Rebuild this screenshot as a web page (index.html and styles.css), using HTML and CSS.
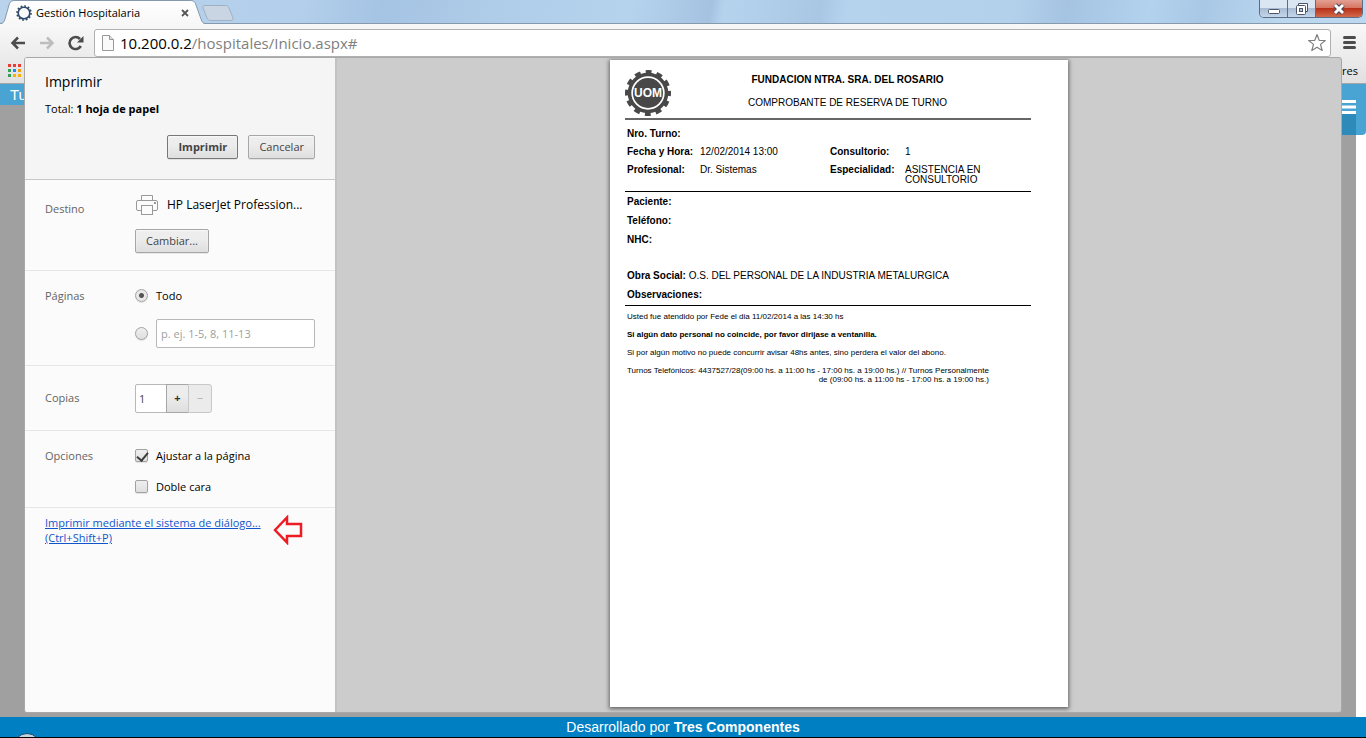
FILE: index.html
```html
<!DOCTYPE html>
<html lang="es">
<head>
<meta charset="utf-8">
<title>Gestión Hospitalaria</title>
<link rel="stylesheet" href="styles.css">
</head>
<body>
<header class="tabstrip">
  <div class="tab">
    <svg class="tab-shape" width="206" height="24" viewBox="0 0 206 24" aria-hidden="true">
      <defs><linearGradient id="tabfill" x1="0" y1="0" x2="0" y2="1"><stop offset="0" stop-color="#fff"/><stop offset="1" stop-color="#f7f7f7"/></linearGradient></defs>
      <path d="M0 24C3 24 4 22 5 19L9 5C10 2 11 1 14 1H190C194 1 195 2 196 5L201 19C202 22 203 24 206 24Z" fill="url(#tabfill)"/>
      <path d="M0 23.500C3 23.500 4 22 5 19L9 5C10 2 11 .5 14 .5H190C194 .5 195 2 196 5L201 19C202 22 203 23.500 206 23.500" fill="none" stroke="#8799ad"/>
    </svg>
    <svg class="favicon" width="16" height="16" viewBox="0 0 16 16" aria-hidden="true"><circle cx="8" cy="8" r="5.800" fill="none" stroke="#2d4966" stroke-width="1.600"/><circle cx="8" cy="8" r="7" fill="none" stroke="#2d4966" stroke-width="1.600" stroke-dasharray="1.800 1.865"/></svg>
    <span class="tab-title">Gestión Hospitalaria</span>
    <button class="tab-close" aria-label="Cerrar pestaña"><svg width="8" height="8" viewBox="0 0 8 8"><path d="M1 1L7 7M7 1L1 7" stroke="#555" stroke-width="1.800"/></svg></button>
  </div>
  <button class="new-tab" aria-label="Nueva pestaña"><svg width="32" height="16" viewBox="0 0 32 16"><path d="M3 .5H23C25 .5 26 1 27 3L31 13C31.500 14.500 31 15.500 29 15.500H9C7 15.500 6 15 5 13L1 3C.5 1.500 1 .5 3 .5Z" fill="#c9d5e2" stroke="#a0b1c4"/></svg></button>
  <div class="window-buttons">
    <button class="win" aria-label="Minimizar"><svg width="14" height="12" viewBox="0 0 14 12"><rect x="1.500" y="6.500" width="11" height="4" rx="1" fill="#fff" stroke="#4d5569"/></svg></button>
    <button class="win" aria-label="Restaurar"><svg width="14" height="14" viewBox="0 0 14 14"><path d="M3.500 3V1.500H12.500V9.500H11" fill="#fff" stroke="#4d5569"/><rect x="1.500" y="3.500" width="9" height="9" rx="1" fill="#fff" stroke="#4d5569"/><rect x="4.500" y="6.500" width="3" height="3" fill="#b5c4d8" stroke="#4d5569"/></svg></button>
    <button class="win close" aria-label="Cerrar"><svg width="14" height="12" viewBox="0 0 14 12"><path d="M3 2L11 10M11 2L3 10" stroke="#4a4256" stroke-width="5"/><path d="M3 2L11 10M11 2L3 10" stroke="#fff" stroke-width="3"/></svg></button>
  </div>
</header>
<nav class="toolbar">
  <button class="nav-button" aria-label="Atrás"><svg width="16" height="14" viewBox="0 0 16 14"><path d="M15 7H3M8 1.500L2.500 7L8 12.500" fill="none" stroke="#4c4c4c" stroke-width="2.500"/></svg></button>
  <button class="nav-button" aria-label="Adelante"><svg width="16" height="14" viewBox="0 0 16 14"><path d="M1 7H13M8 1.500L13.500 7L8 12.500" fill="none" stroke="#bdbdbd" stroke-width="2.500"/></svg></button>
  <button class="nav-button" aria-label="Recargar"><svg width="16" height="16" viewBox="0 0 16 16"><path d="M12.800 11A6 6 0 1 1 12 4" fill="none" stroke="#4c4c4c" stroke-width="2.600"/><path d="M15.500 1V7.500H9Z" fill="#4c4c4c"/></svg></button>
  <div class="omnibox">
    <svg width="12" height="16" viewBox="0 0 12 16" aria-hidden="true"><path d="M.5 .5H7.500L11.500 4.500V15.500H.5Z" fill="#fafafa" stroke="#999"/><path d="M7.500 .5V4.500H11.500" fill="#ddd" stroke="#999"/></svg>
    <span class="url"><span class="host">10.200.0.2</span>/hospitales/Inicio.aspx#</span>
    <svg width="20" height="20" viewBox="0 0 20 20" aria-hidden="true"><path d="M10 1.500L12.200 7.300L18.300 7.500L13.500 11.400L15.200 17.500L10 14.200L4.800 17.500L6.500 11.400L1.700 7.500L7.800 7.300Z" fill="#fff" stroke="#808080" stroke-width="1.200" stroke-linejoin="round"/></svg>
  </div>
  <button class="menu-button" aria-label="Menú"><svg width="13" height="13" viewBox="0 0 13 13"><path d="M1.500 1.500H11.500M1.500 6.500H11.500M1.500 11.500H11.500" stroke="#4c4c4c" stroke-width="3" stroke-linecap="round"/></svg></button>
</nav>
<div class="bookmarks">
  <svg width="14" height="14" viewBox="0 0 14 14" aria-hidden="true"><path d="M0 0h3v3h-3zM5 0h3v3h-3zM10 0h3v3h-3z" fill="#ee3b34"/><path d="M0 5h3v3h-3zM0 10h3v3h-3z" fill="#32a05a"/><path d="M5 5h3v3h-3z" fill="#1a8cf5"/><path d="M10 5h3v3h-3z" fill="#f29c11"/><path d="M5 10h3v3h-3zM10 10h3v3h-3z" fill="#f9b000"/></svg>
  <span>res</span>
</div>
<main class="page">
  <div class="page-head">
    <span class="page-tab">Tu</span>
    <div class="page-menu"><svg width="14" height="14" viewBox="0 0 14 14" aria-hidden="true"><path d="M0 1.500H14M0 7H14M0 12.500H14" stroke="#fff" stroke-width="3"/></svg></div>
  </div>
</main>
<footer class="page-footer">Desarrollado por&nbsp;<b>Tres Componentes</b><span class="orb"></span></footer>

<section class="dialog" role="dialog" aria-label="Imprimir">
  <form class="settings">
    <div class="summary">
      <h1>Imprimir</h1>
      <p>Total: <b>1 hoja de papel</b></p>
      <div class="actions">
        <button type="button" class="button primary">Imprimir</button>
        <button type="button" class="button">Cancelar</button>
      </div>
    </div>
    <div class="group destination">
      <span class="group-label">Destino</span>
      <div class="group-body">
        <div class="printer">
          <svg width="24" height="22" viewBox="0 0 24 22" aria-hidden="true"><g fill="#fcfcfc" stroke="#999"><path d="M6.500 6.500V1.500H17.500V6.500"/><rect x="1.500" y="6.500" width="21" height="10" rx="1.500"/><rect x="6.500" y="11.500" width="11" height="9"/></g><path d="M19 8h2v2h-2z" fill="#999"/></svg>
          <span>HP LaserJet Profession...</span>
        </div>
        <button type="button" class="button">Cambiar...</button>
      </div>
    </div>
    <div class="group pages">
      <span class="group-label">Páginas</span>
      <div class="group-body">
        <label class="choice"><input type="radio" name="pages" checked>Todo</label>
        <div class="choice"><input type="radio" name="pages" aria-label="Intervalo"><input type="text" class="range" placeholder="p. ej. 1-5, 8, 11-13" aria-label="Intervalo de páginas"></div>
      </div>
    </div>
    <div class="group copies">
      <label class="group-label" for="copies">Copias</label>
      <div class="stepper">
        <input type="text" id="copies" value="1">
        <button type="button">+</button>
        <button type="button" disabled>−</button>
      </div>
    </div>
    <div class="group options">
      <span class="group-label">Opciones</span>
      <div class="group-body">
        <label class="choice"><input type="checkbox" checked>Ajustar a la página</label>
        <label class="choice"><input type="checkbox">Doble cara</label>
      </div>
    </div>
    <div class="system">
      <a href="#">Imprimir mediante el sistema de diálogo...<br>(Ctrl+Shift+P)</a>
      <svg width="30" height="30" viewBox="0 0 30 30" aria-hidden="true"><path d="M2 15L14 2.500V9H28V21H14V27.500Z" fill="none" stroke="#ed1c24" stroke-width="2.500"/></svg>
    </div>
  </form>
  <div class="preview">
    <article class="sheet">
      <header class="sheet-head">
        <svg width="46" height="46" viewBox="0 0 46 46" aria-label="UOM">
          <circle cx="23" cy="23" r="21.300" fill="none" stroke="#484848" stroke-width="3.400" stroke-dasharray="6 5.150" stroke-dashoffset="3"/>
          <circle cx="23" cy="23" r="18.500" fill="#fff" stroke="#484848" stroke-width="3.600"/>
          <circle cx="23" cy="23" r="15" fill="#484848"/>
          <text x="23" y="27" text-anchor="middle" class="logo-text">UOM</text>
        </svg>
        <div class="sheet-title"><b>FUNDACION NTRA. SRA. DEL ROSARIO</b><span>COMPROBANTE DE RESERVA DE TURNO</span></div>
      </header>
      <dl class="appointment">
        <dt>Nro. Turno:</dt><dd class="wide"></dd>
        <dt>Fecha y Hora:</dt><dd>12/02/2014 13:00</dd><dt>Consultorio:</dt><dd>1</dd>
        <dt>Profesional:</dt><dd>Dr. Sistemas</dd><dt>Especialidad:</dt><dd class="specialty">ASISTENCIA EN CONSULTORIO</dd>
      </dl>
      <div class="patient">
        <p><b>Paciente:</b></p>
        <p><b>Teléfono:</b></p>
        <p><b>NHC:</b></p>
        <p class="insurance"><b>Obra Social:</b> O.S. DEL PERSONAL DE LA INDUSTRIA METALURGICA</p>
        <p><b>Observaciones:</b></p>
      </div>
      <div class="notes">
        <p>Usted fue atendido por Fede el dia 11/02/2014 a las 14:30 hs</p>
        <p><b>Si algún dato personal no coincide, por favor dirijase a ventanilla.</b></p>
        <p>Si por algún motivo no puede concurrir avisar 48hs antes, sino perdera el valor del abono.</p>
        <p class="hours">Turnos Telefónicos: 4437527/28(09:00 hs. a 11:00 hs - 17:00 hs. a 19:00 hs.) // Turnos Personalmente<br>de (09:00 hs. a 11:00 hs - 17:00 hs. a 19:00 hs.)</p>
      </div>
    </article>
  </div>
</section>
</body>
</html>
```
FILE: styles.css
```css
* { box-sizing: border-box; }
body {
  margin: 0;
  height: 100vh;
  display: flex;
  flex-direction: column;
  position: relative;
  overflow: hidden;
  background: #fff;
  font: 11px/16px "Open Sans", "Noto Sans", sans-serif;
  color: #000;
}
button { font: inherit; padding: 0; border: 0; background: none; }
svg { display: block; flex: none; }
p, h1, dl, dd { margin: 0; }

/* Browser frame */
.tabstrip {
  flex: none;
  height: 24px;
  display: flex;
  align-items: center;
  border-bottom: 1px solid #8799ad;
  background: linear-gradient(100deg, #b9d3ec 0%, #b3cfeb 22%, #a5c3e3 28%, #afcde8 36%, #b6d3ee 46%, #a5c3e1 52%, #b6d3ee 53%, #a9c6e4 60%, #b6d3ee 62%, #b4d1ec 74%, #a5c4e2 78%, #b2d2ee 84%, #a9c8e5 88%, #bcd8f0 94%, #bcd8f0 100%);
}
.tab {
  position: relative;
  width: 206px;
  height: 24px;
  margin-bottom: -1px;
  padding: 1px 17px 0 16px;
  display: flex;
  align-items: center;
  gap: 4px;
}
.tab-shape { position: absolute; left: 0; top: 0; }
.favicon, .tab-title, .tab-close { position: relative; }
.tab-title { flex: 1; white-space: nowrap; }
.tab-close { width: 8px; height: 8px; }
.new-tab { margin: 2px 0 0 -4px; }
.window-buttons {
  align-self: flex-start;
  margin: 0 3px 0 auto;
  height: 18px;
  display: flex;
  border: 1px solid #5b6d85;
  border-top: 0;
  border-radius: 0 0 5px 5px;
  overflow: hidden;
}
.win {
  width: 28px;
  display: grid;
  place-items: center;
  border-right: 1px solid #5b6d85;
  background: linear-gradient(#dbe6f3 50%, #a9bcd4 50%, #c5d6ea);
}
.win.close { width: 46px; border-right: 0; background: linear-gradient(#e3a093 0, #d67665 45%, #b93019 50%, #d2694b); }
.toolbar {
  flex: none;
  height: 34px;
  padding: 4px 10px 1px;
  display: flex;
  align-items: center;
  gap: 13px;
  background: linear-gradient(#f8f8f8, #ebebeb);
}
.nav-button { display: grid; place-items: center; width: 16px; }
.omnibox {
  flex: 1;
  height: 28px;
  margin-left: -3px;
  padding: 0 3px 0 7px;
  display: flex;
  align-items: center;
  gap: 6px;
  border: 1px solid #b0b0b0;
  border-radius: 3px;
  background: #fff;
}
.url { flex: 1; font-size: 15px; color: #808080; }
.host { color: #000; }
.menu-button { margin-left: -1px; }
.bookmarks {
  flex: none;
  height: 26px;
  padding: 0 8px;
  display: flex;
  align-items: center;
  justify-content: space-between;
  border-bottom: 1px solid #a5a5a5;
  background: linear-gradient(#ebebeb, #e0e0e0);
}

/* Page behind the dialog */
.page { flex: 1; border-right: 10px solid #fff; background: #a0a0a0; }
.page-head { display: flex; justify-content: space-between; align-items: flex-start; margin-right: -10px; }
.page-tab { width: 40px; padding: 1px 0 0 10px; background: #49a3d3; color: #fff; font: 15px/20px "Liberation Sans", Arial, sans-serif; }
.page-menu {
  width: 40px;
  height: 51px;
  padding: 16px 10px 0 16px;
  border-radius: 0 0 4px 0;
  background: linear-gradient(#2e8ab8, #2e8ab8) 0 29px / 30px 22px no-repeat, #49a3d3;
}
.page-footer {
  position: relative;
  flex: none;
  height: 21px;
  border-bottom: 1px solid #000;
  background: #0080c3;
  color: #fff;
  text-align: center;
  font: 14px/20px "Liberation Sans", Arial, sans-serif;
  overflow: hidden;
}
.orb { position: absolute; left: 13px; top: 16px; width: 28px; height: 28px; border: 1px solid #114a70; border-radius: 50%; background: #c8d4de; }

/* Print dialog */
.dialog {
  position: absolute;
  inset: 57px 24px 25px;
  display: flex;
  border: 1px solid #a8a8a8;
  border-radius: 3px;
  overflow: hidden;
  background: #ccc;
}
.settings { flex: none; width: 312px; border-right: 2px solid #c2c2c2; background: #fbfbfb; }
.summary { height: 122px; padding: 14px 20px 0; border-bottom: 1px solid #c8c8c8; background: #f5f5f5; }
.summary h1 { font-size: 14px; line-height: 20px; font-weight: 400; }
.summary p { margin-top: 9px; }
.actions { display: flex; justify-content: flex-end; gap: 10px; margin-top: 18px; }
.button {
  height: 24px;
  padding: 0 10px;
  border: 1px solid #a6a6a6;
  border-radius: 2px;
  background: linear-gradient(#ededed 38%, #dedede);
  box-shadow: 0 1px 0 rgba(0, 0, 0, .08), inset 0 1px 2px rgba(255, 255, 255, .75);
  color: #444;
}
.button.primary { border-color: #777; font-weight: 700; }
.group { display: grid; grid-template-columns: 90px minmax(0, 1fr); padding: 0 20px; border-bottom: 1px solid #e6e6e6; }
.group-label { color: #646464; }
.destination { height: 91px; padding-top: 14px; }
.destination .group-label { margin-top: 7px; }
.printer { display: flex; align-items: center; gap: 8px; height: 22px; margin-bottom: 13px; font-size: 12px; white-space: nowrap; }
.pages { height: 95px; padding-top: 17px; }
.choice { display: flex; align-items: center; gap: 8px; }
.pages .choice + .choice { margin-top: 15px; }
input { font: inherit; margin: 0; color: #444; }
input[type="radio"], input[type="checkbox"] {
  appearance: none;
  flex: none;
  width: 13px;
  height: 13px;
  margin-bottom: 1px;
  border: 1px solid #a2a2a2;
  border-radius: 2px;
  background: linear-gradient(#efefef, #dfdfdf);
  box-shadow: 0 1px 1px rgba(0, 0, 0, .1);
}
input[type="radio"] { border-radius: 50%; }
input[type="radio"]:checked { background: radial-gradient(circle, #555 0 2px, #e8e8e8 3px); }
input[type="checkbox"]:checked::after {
  content: "";
  display: block;
  width: 5px;
  height: 9px;
  margin: 0 0 0 3px;
  border: solid #3c3c3c;
  border-width: 0 2px 2px 0;
  transform: rotate(40deg);
}
.range { flex: 1; min-width: 0; height: 29px; padding: 0 4px; border: 1px solid #b8b8b8; border-radius: 2px; background: #fff; }
.range::placeholder { color: #a0a0a0; opacity: 1; }
.copies { height: 65px; align-items: center; }
.stepper { display: flex; }
.stepper input { width: 32px; height: 29px; padding: 0 3px; border: 1px solid #b8b8b8; border-radius: 2px 0 0 2px; }
.stepper button { width: 23px; height: 29px; margin-left: -1px; border: 1px solid #a6a6a6; background: linear-gradient(#ededed 38%, #dedede); color: #333; font-weight: 700; }
.stepper button:last-child { width: 24px; border-color: #c8c8c8; border-radius: 0 3px 3px 0; background: #ebebeb; color: #aaa; font-weight: 400; }
.options { height: 77px; padding-top: 17px; }
.options .choice + .choice { margin-top: 15px; }
.system { display: flex; gap: 12px; padding: 7px 20px; line-height: 15px; white-space: nowrap; }
.system a { color: #15c; }

/* Printed sheet */
.preview { flex: 1; min-width: 0; display: flex; justify-content: center; padding: 2px 0 5px; }
.sheet {
  aspect-ratio: 458 / 647;
  height: 100%;
  padding: 10px 37px 0 15px;
  background: #fff;
  box-shadow: 0 1px 4px 1px rgba(0, 0, 0, .5);
  font: 10px/10px "Liberation Sans", Arial, sans-serif;
}
.sheet-head { display: flex; height: 50px; border-bottom: 2px solid #666; }
.sheet-title { flex: 1; display: flex; flex-direction: column; gap: 13px; padding: 5px 7px 0 0; text-align: center; }
.logo-text { font: bold 12px "Liberation Sans", Arial, sans-serif; fill: #fff; }
.appointment {
  display: grid;
  grid-template-columns: 73px 130px 75px 1fr;
  row-gap: 8px;
  padding: 9px 0 6px 2px;
  border-bottom: 1px solid #000;
}
.appointment dt { font-weight: 700; }
.wide { grid-column: span 3; }
.specialty { max-width: 90px; }
.patient { display: grid; row-gap: 9px; padding: 5px 0 5px 2px; border-bottom: 1px solid #000; }
.insurance { margin-top: 17px; }
.notes { display: grid; row-gap: 9px; padding: 6px 0 0 2px; font-size: 8px; line-height: 9px; }
.hours { justify-self: start; text-align: right; white-space: nowrap; }
```
